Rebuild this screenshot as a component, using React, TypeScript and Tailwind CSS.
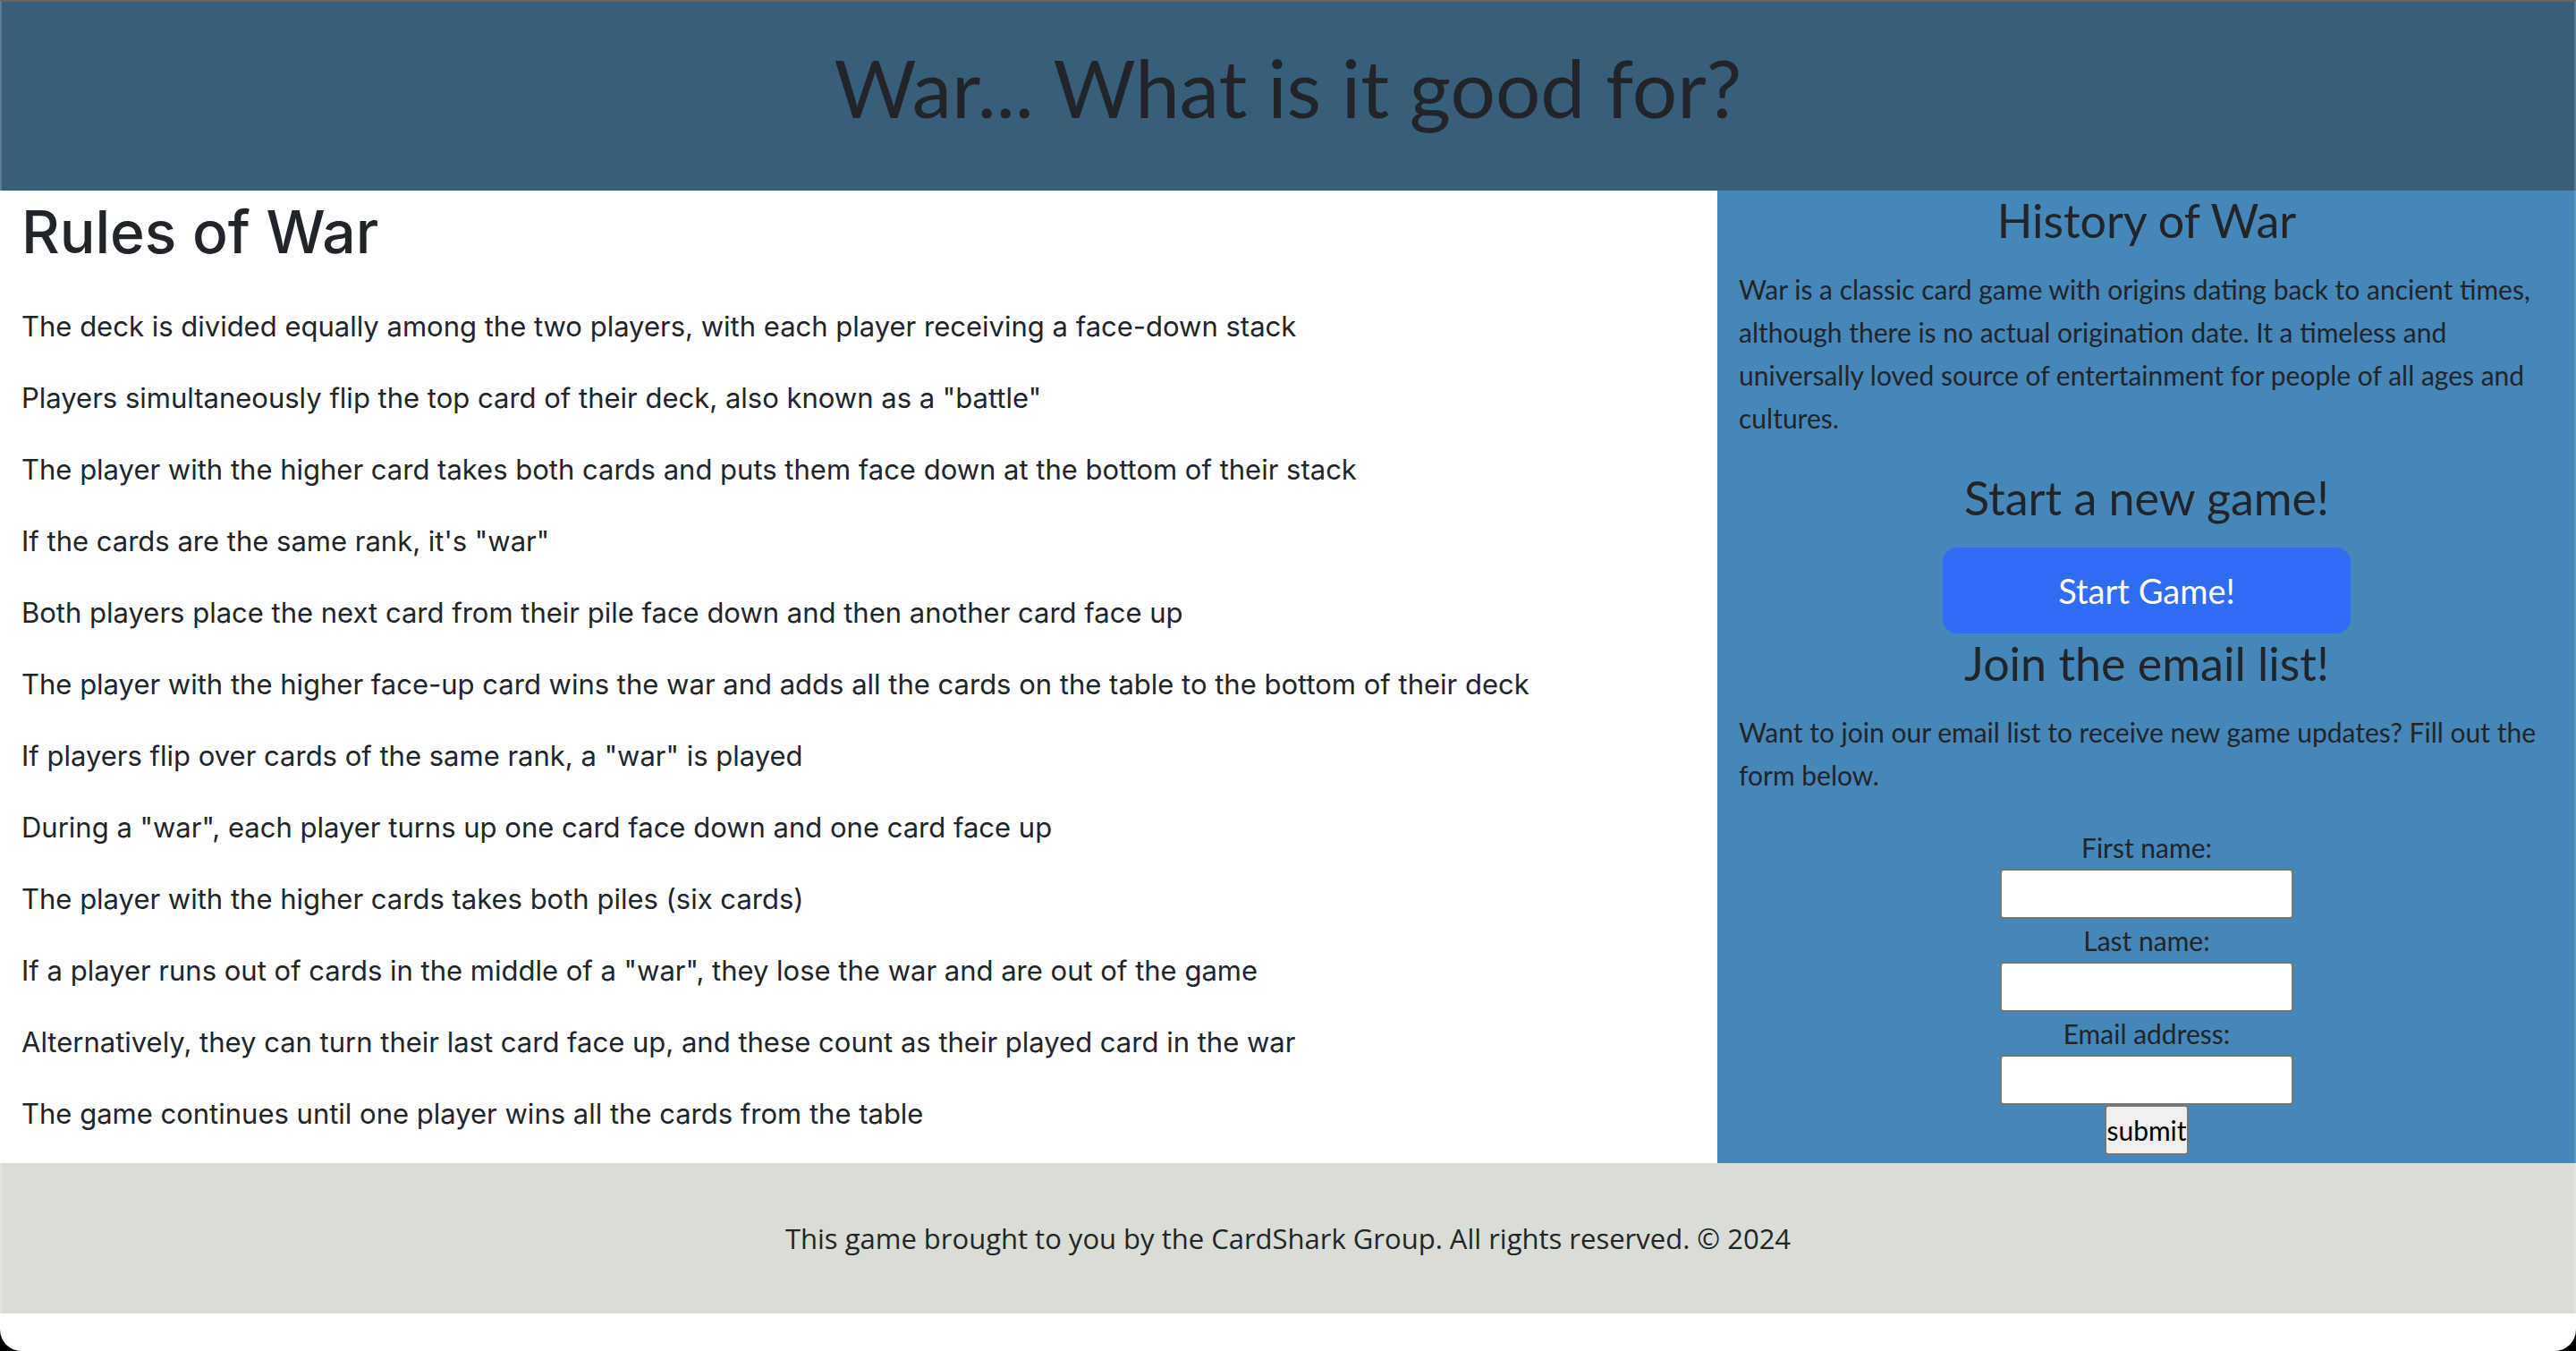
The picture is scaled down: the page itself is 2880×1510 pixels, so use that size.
const rules = [
  'The deck is divided equally among the two players, with each player receiving a face-down stack',
  'Players simultaneously flip the top card of their deck, also known as a "battle"',
  'The player with the higher card takes both cards and puts them face down at the bottom of their stack',
  'If the cards are the same rank, it\'s "war"',
  'Both players place the next card from their pile face down and then another card face up',
  'The player with the higher face-up card wins the war and adds all the cards on the table to the bottom of their deck',
  'If players flip over cards of the same rank, a "war" is played',
  'During a "war", each player turns up one card face down and one card face up',
  'The player with the higher cards takes both piles (six cards)',
  'If a player runs out of cards in the middle of a "war", they lose the war and are out of the game',
  'Alternatively, they can turn their last card face up, and these count as their played card in the war',
  'The game continues until one player wins all the cards from the table',
];

const fields = [
  { id: 'first', label: 'First name:', type: 'text' },
  { id: 'last', label: 'Last name:', type: 'text' },
  { id: 'email', label: 'Email address:', type: 'email' },
];

export default function App() {
  return (
    <div className="min-h-screen bg-black">
      <div className="min-h-screen overflow-hidden rounded-b-3xl bg-white font-['Inter',sans-serif] text-[#212529]">
        <header className="border-x-2 border-t-2 border-x-[#5c7c90] border-t-[#656565] bg-[#385f79] pt-[26px] pb-[45px] text-center font-['Lato',sans-serif]">
          <h1 className="text-[89px] leading-[140px]">War... What is it good for?</h1>
        </header>
        <div className="grid grid-cols-3">
          <main className="col-span-2 px-6">
            <h2 className="pt-2 text-[66px] leading-[76px] font-medium">Rules of War</h2>
            <div className="flex flex-col gap-8 pt-11 text-[31px] leading-[48px]">
              {rules.map((rule) => (
                <p key={rule}>{rule}</p>
              ))}
            </div>
          </main>
          <aside className="border-r-2 border-[#5f98c3] bg-[#4587b9] pr-[22px] pb-[9px] pl-6 font-['Lato',sans-serif] text-[30px] leading-[48px]">
            <h3 className="text-center text-[52px] leading-[66px]">History of War</h3>
            <p className="pt-5">
              War is a classic card game with origins dating back to ancient times, although there is no actual
              origination date. It a timeless and universally loved source of entertainment for people of all ages and
              cultures.
            </p>
            <h3 className="pt-8 text-center text-[52px] leading-[66px]">Start a new game!</h3>
            <button
              type="button"
              className="mx-auto mt-[23px] block h-24 w-[456px] rounded-2xl bg-[#316cf4] text-[38px] text-white"
            >
              Start Game!
            </button>
            <h3 className="text-center text-[52px] leading-[66px]">Join the email list!</h3>
            <p className="pt-5">
              Want to join our email list to receive new game updates? Fill out the form below.
            </p>
            <form className="flex flex-col items-center pt-[33px]">
              {fields.map((f) => (
                <div key={f.id} className="flex flex-col items-center">
                  <label htmlFor={f.id}>{f.label}</label>
                  <input
                    id={f.id}
                    type={f.type}
                    className="h-14 w-[328px] rounded-sm border-2 border-[#767676] bg-white px-1"
                  />
                </div>
              ))}
              <button type="submit" className="h-14 rounded border-2 border-[#767676] bg-[#efefef] text-black">
                submit
              </button>
            </form>
          </aside>
        </div>
        <footer className="border-x-2 border-[#e2e5df] bg-[#daddd5] py-[60px] text-center font-['Open_Sans',sans-serif] text-[31px] leading-[48px]">
          This game brought to you by the CardShark Group. All rights reserved. © 2024
        </footer>
      </div>
    </div>
  );
}
